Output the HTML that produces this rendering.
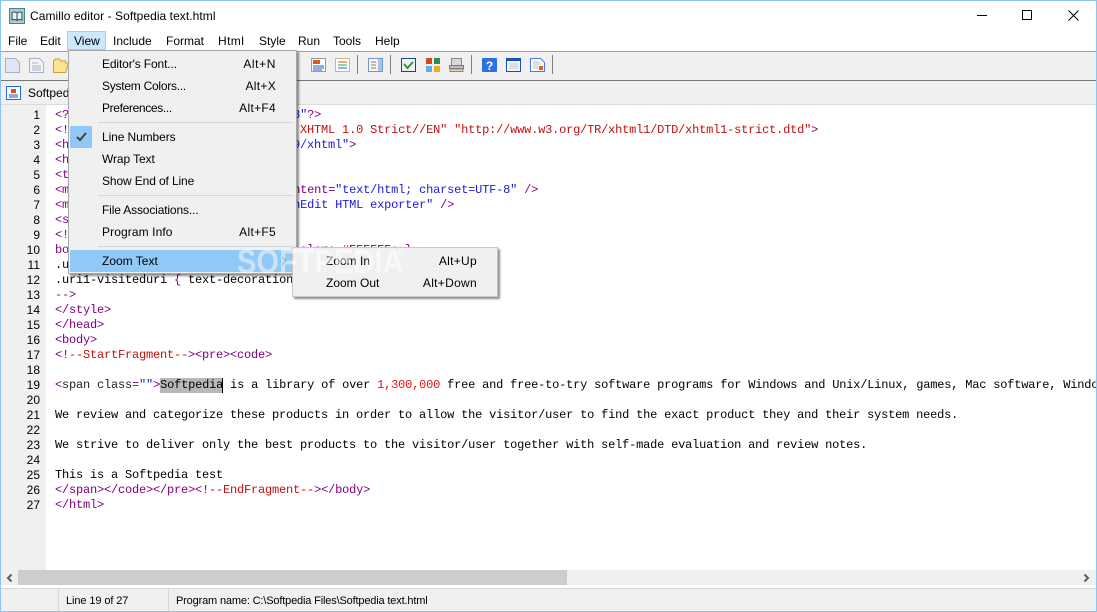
<!DOCTYPE html>
<html><head><meta charset="utf-8"><title>Camillo editor</title>
<style>
html,body{margin:0;padding:0;width:1097px;height:612px;overflow:hidden;background:#fff}
body{font:12px "Liberation Sans",sans-serif;color:#000;position:relative}
.a{position:absolute}
.t{position:absolute;white-space:nowrap;line-height:16px}
.m{top:33px}
.clip{position:absolute;left:55px;top:108px;width:1041px;height:420px;overflow:hidden}
pre{margin:0;font:12px/15px "Liberation Mono",monospace;letter-spacing:-.2px;color:#000;white-space:pre}
i{font-style:normal;color:#800080} b{font-weight:normal;color:#c01010} u{text-decoration:none;color:#1a1ae0}
.n{position:absolute;left:10px;width:30px;text-align:right;font-size:12px;line-height:15px;color:#000}
.mi{position:absolute;left:102px;white-space:nowrap;line-height:16px}
.sc{position:absolute;right:821px;white-space:nowrap;line-height:16px;letter-spacing:.3px}
.sep{position:absolute;left:98px;width:195px;height:1px;background:#d6d6d6}
.ts{position:absolute;top:55px;width:1px;height:19px;background:#808080}
svg{position:absolute;overflow:visible}
</style></head><body>

<!-- editor -->
<div class="a" style="left:1px;top:105px;width:45px;height:465px;background:#f0f0f0"></div>
<div class="a" style="left:160px;top:378px;width:63px;height:15px;background:#b8b8b8"></div>
<div class="a" style="left:222px;top:378px;width:1px;height:15px;background:#000"></div>
<div class="clip"><pre><i>&lt;?xml version=</i><u>"1.0"</u><i> encoding=</i><u>"UTF-8"</u><i>?&gt;</i>
<i>&lt;!</i><b>DOCTYPE html PUBLIC "-//W3C//DTD XHTML 1.0 Strict//EN" "http://www.w3.org/TR/xhtml1/DTD/xhtml1-strict.dtd"</b><i>&gt;</i>
<i>&lt;html xmlns=</i><u>"http://www.w3.org/1999/xhtml"</u><i>&gt;</i>
<i>&lt;head&gt;</i>
<i>&lt;title&gt;&lt;/title&gt;</i>
<i>&lt;meta http-equiv=</i><u>"Content-Type"</u> <i>content=</i><u>"text/html; charset=UTF-8"</u> <i>/&gt;</i>
<i>&lt;meta name=</i><u>"generator"</u> <i>content=</i><u>"SynEdit HTML exporter"</u> <i>/&gt;</i>
<i>&lt;style type=</i><u>"text/css"</u><i>&gt;</i>
<i>&lt;!</i><b>--</b>
<i>body { color: #000000; background-color: #FFFFFF; }</i>
.uri1 { text-decoration: none; }
.uri1-visiteduri <i>{</i> text-decoration: none; <i>}</i>
<b>--</b><i>&gt;</i>
<i>&lt;/style&gt;</i>
<i>&lt;/head&gt;</i>
<i>&lt;body&gt;</i>
<i>&lt;!</i><b>--StartFragment--</b><i>&gt;&lt;pre&gt;&lt;code&gt;</i>

<i>&lt;</i><span style="color:#202030">span class</span><i>=</i><u>""</u><i>&gt;</i>Softpedia is a library of over <b style="color:#f01010">1,300,000</b> free and free-to-try software programs for Windows and Unix/Linux, games, Mac software, Windows drivers

We review and categorize these products in order to allow the visitor/user to find the exact product they and their system needs.

We strive to deliver only the best products to the visitor/user together with self-made evaluation and review notes.

This is a Softpedia test
<i>&lt;/span&gt;&lt;/code&gt;&lt;/pre&gt;&lt;!</i><b>--EndFragment--</b><i>&gt;&lt;/body&gt;</i>
<i>&lt;/html&gt;</i></pre></div>
<div class="n" style="top:108px">1<br>2<br>3<br>4<br>5<br>6<br>7<br>8<br>9<br>10<br>11<br>12<br>13<br>14<br>15<br>16<br>17<br>18<br>19<br>20<br>21<br>22<br>23<br>24<br>25<br>26<br>27</div>

<!-- title + menu -->
<svg style="left:9px;top:8px" width="16" height="16" viewBox="0 0 16 16"><rect x=".5" y=".5" width="15" height="15" fill="#a9cfd6" stroke="#4d7f8c"/><path d="M3 4.500c2-.8 4-.5 5 .5 1-1 3-1.300 5-.5v7.500c-2-.8-4-.5-5 .5-1-1-3-1.300-5-.5z" fill="#e8f0ee" stroke="#2f4a55"/><path d="M8 5v7.500" stroke="#2f4a55"/></svg>
<div class="t" style="left:30px;top:8px;letter-spacing:.06px">Camillo editor - Softpedia text.html</div>
<svg style="left:977px;top:15px" width="11" height="1"><rect width="10" height="1" fill="#000"/></svg>
<svg style="left:1022px;top:10px" width="10" height="10"><rect x=".5" y=".5" width="9" height="9" fill="none" stroke="#000"/></svg>
<svg style="left:1068px;top:10px" width="11" height="11"><path d="M.5.500l10 10M10.500.500l-10 10" stroke="#000" fill="none"/></svg>

<div class="a" style="left:67px;top:31px;width:37px;height:17px;background:#cce8ff;border:1px solid #99d1ff"></div>
<div class="t m" style="left:8px">File</div>
<div class="t m" style="left:40px">Edit</div>
<div class="t m" style="left:74px">View</div>
<div class="t m" style="left:113px">Include</div>
<div class="t m" style="left:166px">Format</div>
<div class="t m" style="left:218px;letter-spacing:.4px">Html</div>
<div class="t m" style="left:259px">Style</div>
<div class="t m" style="left:298px">Run</div>
<div class="t m" style="left:333px">Tools</div>
<div class="t m" style="left:375px">Help</div>

<!-- toolbar -->
<div class="a" style="left:1px;top:51px;width:1095px;height:1px;background:#a0a0a0"></div>
<div class="a" style="left:1px;top:52px;width:1095px;height:28px;background:#f0f0f0"></div>
<div class="a" style="left:1px;top:80px;width:1095px;height:1px;background:#787878"></div>
<div class="a" style="left:1px;top:81px;width:1095px;height:23px;background:#f0f0f0"></div>
<div class="a" style="left:1px;top:104px;width:1095px;height:1px;background:#dcdcdc"></div>

<svg style="left:5px;top:58px" width="15" height="15"><path d="M.5.500h10l4 4v10H.5z" fill="#dfe5f2" stroke="#a9b2c9"/></svg>
<svg style="left:29px;top:58px" width="15" height="15"><path d="M.5.500h10l4 4v10H.5z" fill="#f4f4f4" stroke="#a9b2c9"/><path d="M3 5h6M3 8h9M3 10h9M3 12h9" stroke="#a9b2c9"/></svg>
<svg style="left:53px;top:58px" width="16" height="15"><path d="M.5 14.500V3l2-2h4l1 2h5v2h3l-3 9.500z" fill="#fde58e" stroke="#c9a23a"/></svg>

<svg style="left:311px;top:58px" width="15" height="14"><rect x=".5" y=".5" width="14" height="13" fill="#fff" stroke="#9a9a9a"/><rect x="2" y="2" width="7" height="4" fill="#dd5a20"/><path d="M2 8h11M2 10h11M2 12h9" stroke="#1e5fc8"/></svg>
<svg style="left:335px;top:58px" width="15" height="14"><rect x=".5" y=".5" width="14" height="13" fill="#fff" stroke="#c9b98a"/><path d="M3 4h9" stroke="#c0552a"/><path d="M3 7h9" stroke="#3aa05a"/><path d="M3 10h9" stroke="#2a6ac0"/></svg>
<div class="ts" style="left:357px"></div>
<svg style="left:368px;top:58px" width="15" height="14"><rect x=".5" y=".5" width="14" height="13" fill="#f4f4f8" stroke="#6f9ac4"/><rect x="10" y="1" width="4" height="12" fill="#a9c2e6"/><path d="M3 4h5M3 7h5M3 10h5" stroke="#a8843a"/></svg>
<div class="ts" style="left:390px"></div>
<svg style="left:401px;top:58px" width="15" height="14"><rect x=".5" y=".5" width="14" height="13" fill="#eef2f2" stroke="#0a4c8c"/><path d="M3 6l3.500 4L12 4" fill="none" stroke="#3f8f3f" stroke-width="2"/></svg>
<svg style="left:426px;top:58px" width="14" height="14"><rect width="6" height="6" fill="#d8481c"/><rect x="8" width="6" height="6" fill="#2f8f4a"/><rect y="8" width="6" height="6" fill="#5ab0e8"/><rect x="8" y="8" width="6" height="6" fill="#e8b020"/></svg>
<svg style="left:449px;top:58px" width="15" height="14"><rect x="2.500" y=".5" width="10" height="9" fill="#d8d8d8" stroke="#8a8a8a"/><rect x=".5" y="7.500" width="14" height="3" fill="#bdbdbd" stroke="#7a7a7a"/><rect x="1" y="11" width="13" height="2.500" fill="#e8dcae" stroke="#8a8a7a"/></svg>
<div class="ts" style="left:471px"></div>
<svg style="left:482px;top:58px" width="15" height="14"><rect width="15" height="14" rx="1" fill="#2f6fe0"/><text x="7.500" y="12" text-anchor="middle" font-family="Liberation Sans" font-weight="bold" font-size="12" fill="#fff">?</text></svg>
<svg style="left:506px;top:58px" width="15" height="14"><rect x=".5" y=".5" width="14" height="13" fill="#f0f4fa" stroke="#1a50b8"/><rect x="1" y="1" width="13" height="2" fill="#1a50b8"/><path d="M3 6h9M3 8h9M3 10h9" stroke="#bcc8d4"/></svg>
<svg style="left:530px;top:58px" width="15" height="14"><path d="M.5.500h10l4 4v9H.5z" fill="#fff" stroke="#4a78f0"/><path d="M3 4h6M3 6h8M3 8h5M3 10h5" stroke="#b8c0c8"/><rect x="9" y="8" width="4" height="4" fill="#e0601c"/></svg>
<div class="ts" style="left:552px"></div>

<!-- tab -->
<svg style="left:6px;top:86px" width="15" height="14"><rect x=".5" y=".5" width="14" height="13" fill="#fff" stroke="#1a6ae0"/><rect x="5" y="3" width="5" height="4" fill="#d8501c"/><path d="M3 9h9M3 11h9" stroke="#1a50b8"/></svg>
<div class="t" style="left:28px;top:85px">Softpedia text.html</div>

<!-- scrollbar -->
<div class="a" style="left:1px;top:570px;width:1095px;height:15px;background:#f0f0f0"></div>
<div class="a" style="left:18px;top:570px;width:549px;height:15px;background:#cdcdcd"></div>
<svg style="left:6px;top:574px" width="7" height="8"><path d="M5.500.500L2 4l3.500 3.500" fill="none" stroke="#606060" stroke-width="2"/></svg>
<svg style="left:1083px;top:574px" width="7" height="8"><path d="M1.500.500L5 4 1.500 7.500" fill="none" stroke="#606060" stroke-width="2"/></svg>

<!-- status -->
<div class="a" style="left:1px;top:588px;width:1095px;height:23px;background:#f0f0f0;border-top:1px solid #d6d6d6;box-sizing:border-box"></div>
<div class="a" style="left:58px;top:589px;width:1px;height:22px;background:#d6d6d6"></div>
<div class="a" style="left:168px;top:589px;width:1px;height:22px;background:#d6d6d6"></div>
<div class="t" style="left:66px;top:593px;font-size:11px;letter-spacing:-.1px">Line 19 of 27</div>
<div class="t" style="left:176px;top:593px;font-size:11px;letter-spacing:-.16px">Program name: C:\Softpedia Files\Softpedia text.html</div>

<!-- dropdown -->
<div class="a" style="left:68px;top:50px;width:227px;height:222px;background:#f0f0f0;border:1px solid #a8a8a8;box-shadow:2px 2px 2px rgba(0,0,0,.45)"></div>
<div class="a" style="left:70px;top:126px;width:22px;height:22px;background:#90c8f8"></div>
<svg style="left:76px;top:132px" width="11" height="10"><path d="M1 5l3 3 6-7" fill="none" stroke="#404040" stroke-width="2"/></svg>
<div class="a" style="left:70px;top:250px;width:222px;height:22px;background:#90c8f8"></div>
<div class="mi" style="top:56px;letter-spacing:-.13px">Editor's Font...</div><div class="sc" style="top:56px;letter-spacing:.6px">Alt+N</div>
<div class="mi" style="top:78px;letter-spacing:-.25px">System Colors...</div><div class="sc" style="top:78px">Alt+X</div>
<div class="mi" style="top:100px;letter-spacing:-.35px">Preferences...</div><div class="sc" style="top:100px">Alt+F4</div>
<div class="sep" style="top:122px"></div>
<div class="mi" style="top:129px;letter-spacing:-.1px">Line Numbers</div>
<div class="mi" style="top:151px;letter-spacing:-.1px">Wrap Text</div>
<div class="mi" style="top:173px;letter-spacing:-.12px">Show End of Line</div>
<div class="sep" style="top:195px"></div>
<div class="mi" style="top:202px;letter-spacing:-.15px">File Associations...</div>
<div class="mi" style="top:224px;letter-spacing:.1px">Program Info</div><div class="sc" style="top:224px">Alt+F5</div>
<div class="sep" style="top:246px"></div>
<div class="mi" style="top:253px">Zoom Text</div>
<svg style="left:281px;top:256px" width="6" height="10"><path d="M1 1l4 4-4 4" fill="none" stroke="#606060"/></svg>

<!-- submenu -->
<div class="a" style="left:292px;top:247px;width:204px;height:48px;background:#f0f0f0;border:1px solid #c8c8c8;box-shadow:2px 2px 2px rgba(0,0,0,.45)"></div>
<div class="t" style="left:326px;top:253px">Zoom In</div><div class="t" style="right:620px;top:253px;letter-spacing:.3px">Alt+Up</div>
<div class="t" style="left:326px;top:275px">Zoom Out</div><div class="t" style="right:620px;top:275px;letter-spacing:.3px">Alt+Down</div>

<!-- watermark -->
<div class="t" style="left:237px;top:246px;font:bold 34px/33px 'Liberation Sans',sans-serif;color:rgba(255,255,255,.5);transform:scaleX(.855);transform-origin:0 0">SOFTPEDIA</div>
<div class="t" style="left:397px;top:246px;font:9px/12px 'Liberation Sans',sans-serif;color:rgba(255,255,255,.6)">®</div>

<!-- window border -->
<div class="a" style="left:0;top:0;width:1097px;height:612px;box-sizing:border-box;border:1px solid #8cc4f8"></div>
</body></html>
